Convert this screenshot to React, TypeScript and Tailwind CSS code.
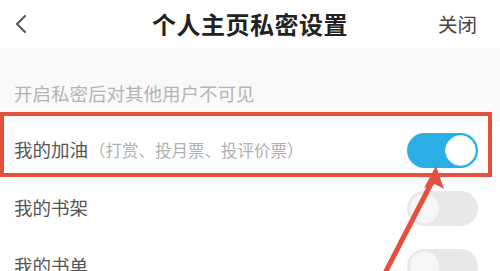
import React from "react";

const font = { fontFamily: '"Noto Sans CJK SC", "Noto Sans", sans-serif' };

function Toggle({ on }: { on: boolean }) {
  return on ? (
    <div className="w-[71px] h-[35px] rounded-full bg-[#2aaee6] flex items-center justify-end pr-[2px]">
      <div className="w-[31px] h-[31px] rounded-full bg-white border border-[#d8eef7]" />
    </div>
  ) : (
    <div className="w-[71px] h-[35px] rounded-full bg-[#e8e8e8] flex items-center pl-[2px]">
      <div className="w-[31px] h-[31px] rounded-full bg-[#f7f7f7] border border-[#ececec]" />
    </div>
  );
}

function Row({ label, note, on }: { label: string; note?: string; on: boolean }) {
  return (
    <div className="h-[58px] flex items-center justify-between pl-[14px] pr-[22px]">
      <div className="flex items-baseline">
        <span className="text-[18.5px] text-[#555]">{label}</span>
        {note && <span className="text-[16.5px] text-[#b0b0b0] ml-[1px]">{note}</span>}
      </div>
      <Toggle on={on} />
    </div>
  );
}

export default function App() {
  return (
    <div className="relative w-[500px] h-[271px] overflow-hidden bg-white" style={font}>
      <div className="h-[48px] grid grid-cols-[1fr_auto_1fr] items-center">
        <div className="pl-[14px] flex items-center">
          <svg width="14" height="20" viewBox="0 0 14 20" fill="none">
            <path d="M11 2 L3 10 L11 18" stroke="#555" strokeWidth="2" strokeLinecap="round" strokeLinejoin="round" />
          </svg>
        </div>
        <div className="text-[24px] font-bold text-[#222] leading-none tracking-[0.5px]">个人主页私密设置</div>
        <div className="flex justify-end pr-[23px]">
          <span className="text-[19.5px] text-[#444]">关闭</span>
        </div>
      </div>
      <div className="h-[73px] bg-[#f9f9f9] pl-[14px] pt-[32px]">
        <div className="text-[18.5px] leading-[26px] text-[#b4b4b4]">开启私密后对其他用户不可见</div>
      </div>
      <Row label="我的加油" note="（打赏、投月票、投评价票）" on={true} />
      <Row label="我的书架" on={false} />
      <Row label="我的书单" on={false} />

      <div className="absolute left-0 top-[112px] w-[492px] h-[65px] border-[4px] border-[#e4503f]" />
      <svg className="absolute left-0 top-0" width="500" height="271" viewBox="0 0 500 271">
        <line x1="433" y1="180" x2="384" y2="275" stroke="#e4503f" strokeWidth="5" />
        <polygon points="436,166 444,189 435,184 424,188" fill="#e4503f" />
      </svg>
    </div>
  );
}
